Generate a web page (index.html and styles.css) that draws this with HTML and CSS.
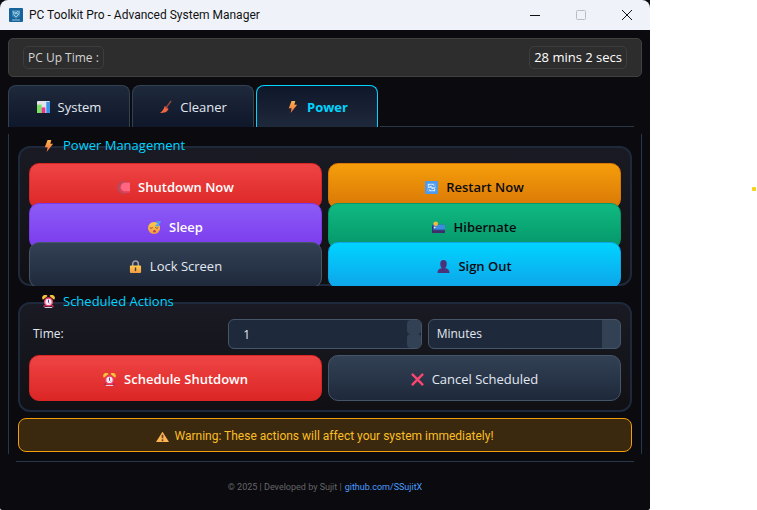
FILE: index.html
```html
<!DOCTYPE html>
<html lang="en">
<head>
<meta charset="utf-8">
<title>PC Toolkit Pro - Advanced System Manager</title>
<link rel="stylesheet" href="styles.css">
</head>
<body>
<svg class="defs" aria-hidden="true">
  <defs>
    <linearGradient id="fire" x1="0" y1="0" x2="0" y2="1"><stop offset="0" stop-color="#ffb84a"/><stop offset="1" stop-color="#f4693f"/></linearGradient>
    <linearGradient id="gold" x1="0" y1="0" x2="0" y2="1"><stop offset="0" stop-color="#ffcc4a"/><stop offset="1" stop-color="#f39a44"/></linearGradient>
    <symbol id="bolt" viewBox="0 0 14 14"><path fill="url(#fire)" d="M6 1h4L9 5h3L5 14l1-5H3z"/></symbol>
    <symbol id="clock" viewBox="0 0 14 14">
      <path stroke="#b52b55" stroke-width="2" d="M3 11l-1 2M11 11l1 2"/>
      <path fill="#f9c23c" d="M1 5a3 3 0 0 1 5-4zM13 5a3 3 0 0 0-5-4z"/>
      <circle cx="7" cy="7.500" r="5" fill="#ec3f6c"/><circle cx="7" cy="7.500" r="3.400" fill="#f5e8f3"/>
      <path fill="none" stroke="#52406e" d="M7 5v3l1 1"/><path fill="#e6dcea" d="M3 13h8v1H3z"/>
    </symbol>
  </defs>
</svg>
<div class="window">
  <header class="titlebar">
    <svg class="app-icon" viewBox="0 0 14 14"><rect width="14" height="14" rx="1" fill="#17649b"/><path fill="#3985b3" d="M3 2h8v6l-4 3-4-3z"/><path fill="none" stroke="#b9d8e8" stroke-width=".8" d="M4 3l1 4 2 2 3-3V3M5 4l4 2M9 3L6 6M3 12h8"/></svg>
    <h1>PC Toolkit Pro - Advanced System Manager</h1>
    <div class="caption">
      <button type="button" aria-label="Minimize"><svg viewBox="0 0 12 12"><path d="M1 6.500h10"/></svg></button>
      <button type="button" aria-label="Maximize" disabled><svg viewBox="0 0 12 12"><rect x="1.500" y="1.500" width="9" height="9" rx="1"/></svg></button>
      <button type="button" aria-label="Close"><svg viewBox="0 0 12 12"><path d="M1 1l10 10M11 1L1 11"/></svg></button>
    </div>
  </header>
  <main>
    <section class="uptime"><span class="chip">PC Up Time :</span><span class="chip value">28 mins 2 secs</span></section>
    <nav class="tabs" role="tablist">
      <button type="button" class="tab" role="tab"><svg viewBox="0 0 14 14"><rect width="14" height="13" y="1" rx="1" fill="#e4e1ea"/><path fill="#7be05f" d="M0 5h5v9H0z"/><path fill="#e9368c" d="M5 8h4v6H5z"/><path fill="#3a95ea" d="M10 2h4v12h-4z"/></svg>System</button>
      <button type="button" class="tab" role="tab"><svg viewBox="0 0 14 14"><path stroke="#9a4a3c" stroke-width="1.600" d="M13 1L8 8"/><path fill="#f0683f" d="M6 7l4 3c-1 3-4 4-9 4 3-2 4-4 5-7z"/><path stroke="#c95045" stroke-width="1.500" d="M6 7l4 3"/></svg>Cleaner</button>
      <button type="button" class="tab active" role="tab" aria-selected="true"><svg><use href="#bolt"/></svg>Power</button>
    </nav>
    <div class="pane">
      <section class="group">
        <h2><svg><use href="#bolt"/></svg>Power Management</h2>
        <div class="actions">
          <button type="button" class="btn red"><svg viewBox="0 0 14 14"><circle cx="7" cy="7" r="7" fill="#b84b59"/><path fill="#df405c" d="M14 1v12H8a5 5 0 0 1-5-6 6 6 0 0 1 6-6z"/><path fill="#ff6681" d="M8 2h6v9H9a4 4 0 0 1-1-9z"/></svg>Shutdown Now</button>
          <button type="button" class="btn orange"><svg viewBox="0 0 14 14"><rect width="14" height="14" rx="1" fill="#4f9aec"/><rect x="3" y="3" width="8" height="8" fill="#d9ecff"/><path fill="none" stroke="#4f9aec" stroke-width="1.200" d="M4 6c1-2 4-2 5 0M10 8c-1 2-4 2-5 0M10 3v3H7M4 11V8h3"/></svg>Restart Now</button>
          <button type="button" class="btn purple"><svg viewBox="0 0 14 14"><circle cx="6.500" cy="7.500" r="6.500" fill="url(#gold)"/><path fill="none" stroke="#704337" d="M2 7c1 1 2 1 3 0M8 7c1 1 2 1 3 0"/><circle cx="7" cy="11" r="1.300" fill="#b7385e"/><path fill="none" stroke="#46a8ee" stroke-width="1.500" d="M9 1h4L9 5h3"/></svg>Sleep</button>
          <button type="button" class="btn green"><svg viewBox="0 0 14 14"><path fill="#2864b8" d="M0 4h14v9H0z"/><path fill="#3c8bdc" d="M4 4h10v5H4z"/><path fill="#402e68" d="M0 5h1v5h13v3H0z"/><circle cx="4" cy="3" r="2.500" fill="#f8b640"/><circle cx="3" cy="7" r="1" fill="#eee"/></svg>Hibernate</button>
          <button type="button" class="btn slate"><svg viewBox="0 0 14 14"><path fill="none" stroke="#a69db0" stroke-width="1.700" d="M4 7V4a3 3 0 0 1 6 0v3"/><rect x="1" y="6" width="12" height="8" rx="1" fill="url(#gold)"/><path stroke="#51384a" stroke-width="1.500" d="M7 8v4"/></svg>Lock Screen</button>
          <button type="button" class="btn cyan"><svg viewBox="0 0 14 14"><path fill="#4b327b" d="M3.500 4a3.500 4 0 0 1 7 0c0 3-1 4-2 5 3 0 5 2 5 5H.5c0-3 2-5 5-5-1-1-2-2-2-5z"/></svg>Sign Out</button>
        </div>
      </section>
      <section class="group">
        <h2><svg><use href="#clock"/></svg>Scheduled Actions</h2>
        <div class="fields">
          <label for="time">Time:</label>
          <div class="spin"><input id="time" type="number" value="1" min="1"><span class="steps"><i></i><i></i></span></div>
          <select aria-label="Time unit"><option>Minutes</option><option>Hours</option></select>
        </div>
        <div class="schedule">
          <button type="button" class="btn red"><svg><use href="#clock"/></svg>Schedule Shutdown</button>
          <button type="button" class="btn slate"><svg viewBox="0 0 14 14"><path stroke="#f9466e" stroke-width="2.600" d="M1 1l12 12M13 1L1 13"/></svg>Cancel Scheduled</button>
        </div>
      </section>
      <p class="warning"><svg viewBox="0 0 14 14"><path fill="#ffb452" d="M7 2l7 11H0z"/><path stroke="#68432f" stroke-width="1.800" d="M7 5v4M7 10v2"/></svg>Warning: These actions will affect your system immediately!</p>
    </div>
  </main>
  <footer>© 2025 | Developed by Sujit | <a href="https://github.com/SSujitX">github.com/SSujitX</a></footer>
</div>
<aside><span class="dot"></span></aside>
</body>
</html>
```

FILE: styles.css
```css
* { box-sizing: border-box; }
body {
  margin: 0;
  min-height: 100vh;
  display: flex;
  background: #fff;
  font: 12px/20px "Open Sans", "Noto Sans", sans-serif;
  color: #e2e8f0;
}
button, input, select { font: inherit; color: inherit; margin: 0; }
svg { width: 13px; height: 13px; flex: none; }
.defs { position: absolute; width: 0; height: 0; }
.window {
  flex: 1;
  display: flex;
  flex-direction: column;
  background: #0a0a0f;
  border-radius: 0 0 2px 2px;
}
aside { width: 107px; padding: 187px 1px 0 0; }
.dot { display: block; width: 4px; height: 4px; margin-left: auto; border-radius: 1px; background: #fbd116; }

.titlebar {
  height: 30px;
  display: flex;
  align-items: center;
  padding-left: 9px;
  background: #eff3f9;
  border-radius: 8px 8px 0 0;
  color: #111;
}
.titlebar h1 { margin: 0 auto 0 6px; font: 400 12px/20px Roboto, sans-serif; }
.titlebar .app-icon { width: 14px; height: 14px; }
.caption { display: flex; }
.caption button { width: 46px; height: 28px; padding: 0; border: 0; background: none; display: grid; place-items: center; }
.caption svg { width: 12px; height: 12px; fill: none; stroke: #111; }
.caption button:disabled svg { stroke: #bbbdc2; }

main { padding: 8px 8px 0; }
.uptime {
  height: 39px;
  display: flex;
  align-items: center;
  justify-content: space-between;
  padding: 0 14px;
  background: #2d2d2d;
  border: 1px solid #404040;
  border-radius: 5px;
}
.chip { padding: 0 4px; border: 1px solid #3d3d3d; border-radius: 5px; color: #d4d4d4; line-height: 21px; }
.chip.value { color: #fff; font-size: 13px; }

.tabs {
  position: relative;
  z-index: 1;
  display: flex;
  gap: 2px;
  width: fit-content;
  margin: 8px 0 -1px;
  padding-right: 2px;
  background: #0a0a0f;
}
.tab {
  width: 122px;
  height: 42px;
  display: flex;
  align-items: center;
  justify-content: center;
  gap: 8px;
  padding: 0;
  border: 1px solid #334155;
  border-bottom: 0;
  border-radius: 8px 8px 0 0;
  background: linear-gradient(#1e293b, #0f172a);
  font-size: 13px;
}
.tab.active { border-color: #00d4ff; background: linear-gradient(#0f172a, #1e293b); color: #00d4ff; font-weight: 700; }

.pane { position: relative; padding: 20px 10px 10px; }
.pane::before, .pane::after { content: ""; position: absolute; border: 0 solid #2a3649; pointer-events: none; }
.pane::before { inset: 0 8px; border-width: 1px 0; }
.pane::after { inset: 8px 0; border-width: 0 1px; }

.group {
  margin-bottom: 16px;
  padding: 0 9px;
  border: 2px solid #1e293b;
  border-radius: 12px;
  background: linear-gradient(#1a1a24, #101014);
}
.group + .group { margin-bottom: 6px; padding-bottom: 9px; }
.group h2 {
  display: flex;
  align-items: center;
  gap: 8px;
  margin: -13px 0 8px 13px;
  padding-left: 9px;
  padding-left: 0;
  font-size: 13px;
  font-weight: 400;
  color: #00d4ff;
}
.actions, .schedule { display: grid; grid-template-columns: 1fr 1fr; column-gap: 6px; }
.actions { grid-template-rows: 40px 39px 44px; margin-bottom: -2px; overflow: hidden; }
.btn {
  height: 46px;
  display: flex;
  align-items: center;
  justify-content: center;
  gap: 8px;
  padding: 2px 0 0;
  border: 1px solid;
  border-radius: 10px;
  font-size: 13px;
  font-weight: 600;
}
.red { background: linear-gradient(#ef4444, #dc2626); border-color: #dc2626; color: #fff; }
.orange { background: linear-gradient(#f59e0b, #d97706); border-color: #d97706; color: #0a0a0f; }
.purple { background: linear-gradient(#8b5cf6, #7c3aed); border-color: #7c3aed; color: #fff; }
.green { background: linear-gradient(#10b981, #059669); border-color: #059669; color: #0a0a0f; }
.slate { background: linear-gradient(#334155, #1e293b); border-color: #475569; color: #e2e8f0; font-weight: 400; }
.cyan { background: linear-gradient(#00d4ff, #0ea5e9); border-color: #0ea5e9; color: #0a0a0f; }

.fields { display: grid; grid-template-columns: repeat(3, 1fr); gap: 6px; margin-bottom: 6px; align-items: center; }
.fields label { padding-left: 4px; }
.spin { position: relative; }
.spin input, .fields select {
  display: block;
  width: 100%;
  height: 30px;
  border: 1px solid #475569;
  border-radius: 6px;
  background: #1e293b;
  appearance: none;
}
.spin input { padding: 0 24px 0 14px; appearance: textfield; }
.fields select { padding: 0 24px 0 8px; background: linear-gradient(#334155, #334155) right / 18px 100% no-repeat #1e293b; }
.steps { position: absolute; inset: 1px 1px 1px auto; width: 14px; display: grid; pointer-events: none; }
.steps i { background: #334155; border-radius: 4px; }

.warning {
  height: 34px;
  display: flex;
  align-items: center;
  justify-content: center;
  gap: 5px;
  margin: 0;
  padding-top: 2px;
  border: 1px solid #f59e0b;
  border-radius: 8px;
  background: #3a280f;
  color: #fbbf24;
  font-family: Roboto, sans-serif;
}
footer { flex: 1; padding-top: 2px; display: grid; grid-auto-flow: column; place-content: center; gap: 3px; color: #666; font: 9px/20px Roboto, sans-serif; }
footer a { color: #4a9eff; text-decoration: none; }
```
